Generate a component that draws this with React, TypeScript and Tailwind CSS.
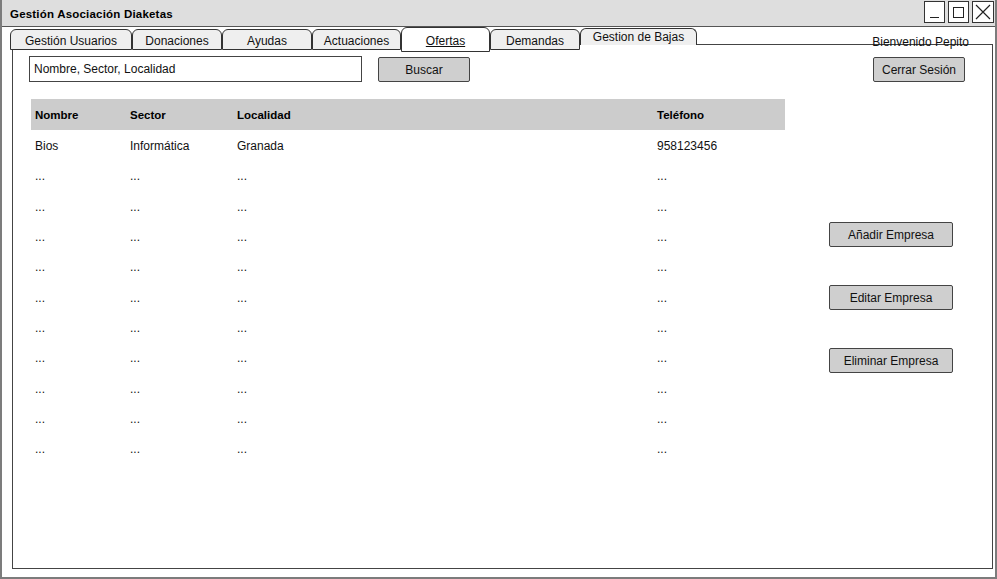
import React from "react";

const font = { fontFamily: '"Liberation Sans", Arial, sans-serif' };

type Tab = { label: string; w: number; kind: "normal" | "active" | "raised" };

const tabs: Tab[] = [
  { label: "Gestión Usuarios", w: 122, kind: "normal" },
  { label: "Donaciones", w: 90, kind: "normal" },
  { label: "Ayudas", w: 90, kind: "normal" },
  { label: "Actuaciones", w: 89, kind: "normal" },
  { label: "Ofertas", w: 89, kind: "active" },
  { label: "Demandas", w: 90, kind: "normal" },
  { label: "Gestion de Bajas", w: 117, kind: "raised" },
];

const rows: string[][] = [
  ["Bios", "Informática", "Granada", "958123456"],
  ...Array.from({ length: 10 }, () => ["...", "...", "...", "..."]),
];

function TabItem({ t }: { t: Tab }) {
  if (t.kind === "active") {
    return (
      <div
        className="relative z-10 flex h-[25px] shrink-0 items-start justify-center rounded-t-[6px] border border-[#333] bg-white pt-[4px] text-[12px] text-[#111] underline"
        style={{ width: t.w }}
      >
        {t.label}
      </div>
    );
  }
  if (t.kind === "raised") {
    return (
      <div
        className="relative z-10 mt-[1px] flex h-[17px] shrink-0 items-center justify-center rounded-t-[6px] border border-b-0 border-[#333] bg-[#efefef] text-[12px] text-[#111]"
        style={{ width: t.w }}
      >
        {t.label}
      </div>
    );
  }
  return (
    <div
      className="relative z-10 mt-[2px] flex h-[21px] shrink-0 items-center justify-center rounded-t-[6px] border border-[#333] bg-[#efefef] pt-[3px] text-[12px] text-[#111]"
      style={{ width: t.w }}
    >
      {t.label}
    </div>
  );
}

function Btn({ label, w }: { label: string; w: number }) {
  return (
    <div
      className="flex h-[25px] items-center justify-center rounded-[2px] border border-[#444] bg-[#cfcfcf] pt-[1px] text-[12px] text-[#111]"
      style={{ width: w }}
    >
      {label}
    </div>
  );
}

export default function App() {
  return (
    <div
      className="flex h-[579px] w-[997px] flex-col overflow-hidden border-2 border-t-0 border-[#7c7c7c] bg-white text-black"
      style={font}
    >
      {/* Title bar */}
      <div className="flex h-[27px] shrink-0 items-center border-b border-[#555] bg-[#dedede] pl-[8px] pr-[1px]">
        <span className="pt-[3px] text-[11.5px] font-bold tracking-[0.2px]">Gestión Asociación Diaketas</span>
        <div className="ml-auto flex gap-[3px] self-start pt-[1px]">
          <div className="flex h-[22px] w-[21px] items-end justify-center border border-[#333] bg-white pb-[4px]">
            <div className="h-[1px] w-[9px] bg-[#222]" />
          </div>
          <div className="flex h-[22px] w-[21px] items-center justify-center border border-[#333] bg-white">
            <div className="h-[11px] w-[11px] border border-[#222]" />
          </div>
          <div className="flex h-[22px] w-[22px] items-center justify-center border border-[#333] bg-white">
            <svg width="16" height="16" viewBox="0 0 16 16">
              <path d="M1 1 L15 15 M15 1 L1 15" stroke="#222" strokeWidth="1.2" />
            </svg>
          </div>
        </div>
      </div>

      {/* Tab row */}
      <div className="flex h-[25px] shrink-0 items-start pl-[8px]">
        {tabs.map((t) => (
          <TabItem key={t.label} t={t} />
        ))}
        <div className="relative z-10 ml-auto mr-[26px] mt-[8px] text-[12px] leading-[14px] text-[#111]">
          Bienvenido Pepito
        </div>
      </div>

      {/* Panel */}
      <div className="mb-[8px] ml-[10px] mr-[2px] -mt-[8px] flex flex-1 flex-col border border-[#444] pt-[11px]">
        <div className="flex items-center">
          <div className="ml-[16px] flex h-[26px] w-[333px] items-center border border-[#444] bg-white pl-[4px] text-[12px] text-[#111]">
            Nombre, Sector, Localidad
          </div>
          <div className="ml-[16px]">
            <Btn label="Buscar" w={92} />
          </div>
          <div className="ml-auto mr-[27px]">
            <Btn label="Cerrar Sesión" w={92} />
          </div>
        </div>

        <div className="mt-[17px] flex">
          <div className="ml-[18px] w-[754px]">
            <div className="flex h-[31px] items-center bg-[#cccccc] pt-[2px] text-[11.5px] font-bold">
              <div className="w-[99px] pl-[4px]">Nombre</div>
              <div className="w-[107px]">Sector</div>
              <div className="w-[420px]">Localidad</div>
              <div className="flex-1">Teléfono</div>
            </div>
            {rows.map((r, i) => (
              <div key={i} className="flex h-[30.3px] items-center pt-[2px] text-[12px] text-[#111]">
                <div className="w-[99px] pl-[4px]">{r[0]}</div>
                <div className="w-[107px]">{r[1]}</div>
                <div className="w-[420px]">{r[2]}</div>
                <div className="flex-1">{r[3]}</div>
              </div>
            ))}
          </div>

          <div className="ml-[44px] mt-[123px] flex flex-col gap-[38px]">
            <Btn label="Añadir Empresa" w={124} />
            <Btn label="Editar Empresa" w={124} />
            <Btn label="Eliminar Empresa" w={124} />
          </div>
        </div>
      </div>
    </div>
  );
}
